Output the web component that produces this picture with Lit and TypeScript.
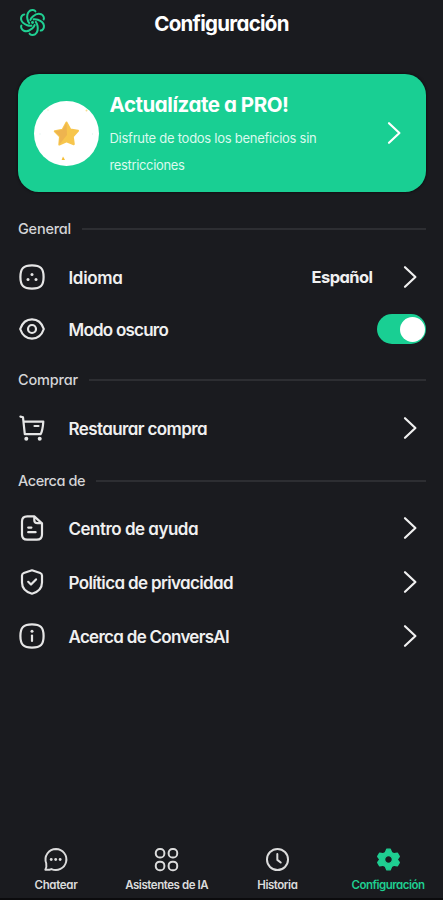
import { LitElement, html, css, svg, TemplateResult } from "lit";
import { customElement, property, state } from "lit/decorators.js";

/** Single-line label whose tracking is adjusted to occupy a given width. */
@customElement("fit-label")
class FitLabel extends LitElement {
  @property() text = "";
  @property({ type: Number }) span = 0;
  @state() private tracking = 0;

  static styles = css`
    :host { display: block; flex: none; white-space: nowrap; }
    .t { display: inline-block; }
  `;

  firstUpdated() {
    const el = this.renderRoot.querySelector(".t") as HTMLElement;
    const natural = el.getBoundingClientRect().width;
    this.tracking = (this.span - natural) / this.text.length;
  }

  render() {
    return html`<span class="t" style="letter-spacing:${this.tracking}px">${this.text}</span>`;
  }
}

const icon = (body: TemplateResult | unknown, cls = "icon") =>
  html`<svg class=${cls} viewBox="0 0 28 28" fill="none" stroke="currentColor" stroke-width="2.2" stroke-linecap="round" stroke-linejoin="round">${body}</svg>`;

const squircle = svg`<path d="M14 2.4C22.6 2.4 25.6 5.4 25.6 14S22.6 25.6 14 25.6 2.4 22.6 2.4 14 5.4 2.4 14 2.4Z"/>`;

const icons: Record<string, unknown> = {
  language: svg`${squircle}<g fill="currentColor" stroke="none"><circle cx="14" cy="11.4" r="1.5"/><circle cx="10" cy="16.6" r="1.5"/><circle cx="18" cy="16.6" r="1.5"/></g>`,
  eye: svg`<path d="M2.2 14C4.2 8 8.6 4.4 14 4.4S23.8 8 25.8 14C23.8 20 19.4 23.6 14 23.6S4.2 20 2.2 14Z"/><circle cx="14" cy="14" r="4"/>`,
  cart: svg`<path d="M2.4 2.6 5 3.3 6.8 20.2H22.6C24.2 17.5 25 12 25.3 7.6H5.8M16.5 12H20.5"/><g fill="currentColor" stroke="none"><circle cx="8.3" cy="24.8" r="2"/><circle cx="21.7" cy="24.8" r="2"/></g>`,
  doc: svg`<path d="M16.3 2.4H9.2Q4 2.4 4 7.6V20.4Q4 25.6 9.2 25.6H18.8Q24 25.6 24 20.4V9.4ZM16.3 2.6V6.2Q16.3 9.2 19.4 9.2H23.5M10.2 13.6H13.4M10.2 18.2H17.6"/>`,
  shield: svg`<path d="M14 2.3 22.2 5Q24 5.7 24 7.6V14.4C24 20.6 19 24.2 14 25.7 9 24.2 4 20.6 4 14.4V7.6Q4 5.7 5.8 5ZM10.2 13.8 13 16.5 18 11.4"/>`,
  info: svg`${squircle}<path d="M14 13.6V19"/><circle cx="14" cy="9.2" r="1.5" fill="currentColor" stroke="none"/>`,
  chat: svg`<path d="M14.6 2.2A11.8 11.8 0 1 1 9.4 24.7Q6.4 26 2.6 25.4 4.4 22.6 3.6 18.2A11.8 11.8 0 0 1 14.6 2.2Z"/><g fill="currentColor" stroke="none"><circle cx="9.2" cy="14" r="1.6"/><circle cx="14.2" cy="14" r="1.6"/><circle cx="19.2" cy="14" r="1.6"/></g>`,
  grid: svg`<rect x="2" y="2.2" width="9.6" height="9.6" rx="4.3"/><rect x="16.4" y="2.2" width="9.6" height="9.6" rx="4.3"/><rect x="2" y="16.4" width="9.6" height="9.6" rx="4.3"/><rect x="16.4" y="16.4" width="9.6" height="9.6" rx="4.3"/>`,
  clock: svg`<circle cx="14" cy="14" r="11.8"/><path d="M13.8 7.8V14.4L17.6 17.4"/>`,
  gear: svg`<path fill="currentColor" fill-rule="evenodd" stroke-width="1.6" d="M12.2 2.4H15.8L17.6 6.4 20.4 7.6 24 7 26 10.6 23.6 14 26 17.4 24 21 20.4 20.4 17.6 21.6 15.8 25.6H12.2L10.4 21.6 7.6 20.4 4 21 2 17.4 4.4 14 2 10.6 4 7 7.6 7.6 10.4 6.4ZM14 9.6A4.4 4.4 0 1 0 14 18.4 4.4 4.4 0 1 0 14 9.6Z"/>`,
};

const chevron = html`<svg class="chevron" viewBox="0 0 14 24" fill="none" stroke="currentColor" stroke-width="2.2" stroke-linecap="round" stroke-linejoin="round"><path d="M2 2.2 12.4 12 2 21.8"/></svg>`;

interface Row { icon: string; label: string; span: number; value?: string; toggle?: boolean }
interface Section { cls: string; title: string; span: number; rows: Row[] }

const sections: Section[] = [
  { cls: "general", title: "General", span: 53, rows: [
    { icon: "language", label: "Idioma", span: 54, value: "Español" },
    { icon: "eye", label: "Modo oscuro", span: 99.5, toggle: true },
  ] },
  { cls: "buy", title: "Comprar", span: 60, rows: [
    { icon: "cart", label: "Restaurar compra", span: 138.5 },
  ] },
  { cls: "about", title: "Acerca de", span: 67, rows: [
    { icon: "doc", label: "Centro de ayuda", span: 129.5 },
    { icon: "shield", label: "Política de privacidad", span: 164.5 },
    { icon: "info", label: "Acerca de ConversAI", span: 160.5 },
  ] },
];

const tabs = [
  { icon: "chat", label: "Chatear", span: 43 },
  { icon: "grid", label: "Asistentes de IA", span: 83 },
  { icon: "clock", label: "Historia", span: 40 },
  { icon: "gear", label: "Configuración", span: 73 },
];

@customElement("app-root")
class AppRoot extends LitElement {
  @state() private dark = true;

  static styles = css`
    :host {
      display: flex; flex-direction: column; box-sizing: border-box;
      width: 100%; height: 900px; overflow: hidden;
      background: #1a1b1f; color: #f0f0f0; border-bottom: 2px solid #0b0b0d;
      font-family: Inter, Lato, sans-serif; font-feature-settings: "cv11";
    }
    svg { display: block; flex: none; overflow: visible; }
    header { display: grid; grid-template-columns: 60px 1fr 60px; align-items: center; height: 46px; }
    .logo { width: 27px; height: 27px; margin-left: 19px; margin-top: -1px; color: #20cf92; }
    .title { justify-self: center; font-size: 20.5px; font-weight: 650; color: #fff; }
    .card {
      display: flex; align-items: center; flex: none; box-sizing: border-box;
      margin: 28px 17px 0 17.5px; height: 118px; padding: 0 25.5px 0 16px;
      border-radius: 21px; background: #19cf93; color: #fff;
      box-shadow: 0 0 3px #07090a;
    }
    .badge { flex: none; width: 65px; height: 65px; border-radius: 50%; background: #fff; }
    .copy { flex: 1; margin-left: 11px; padding-top: 3px; }
    .promo { font-size: 20.5px; font-weight: 700; line-height: 28px; margin-bottom: 6px; }
    .sub { font-size: 13px; line-height: 27px; color: #dbfaee; }
    .chevron { width: 14px; height: 24px; }
    section { margin: 0 17px 0 18px; }
    .general { margin-top: 27px; }
    .buy { margin-top: 15px; }
    .about { margin-top: 16px; }
    .head { display: flex; align-items: center; gap: 11px; height: 20px; font-size: 14.5px; line-height: 18px; font-weight: 500; color: #d5d5d7; }
    .rule { flex: 1; height: 2px; background: #2d2e32; }
    .general .head { margin-bottom: 12px; }
    .buy .head { margin-bottom: 11px; }
    .about .head { margin-bottom: 10px; }
    .row { display: flex; align-items: center; height: 54px; }
    .general .row { height: 52px; }
    .icon { width: 28px; height: 28px; color: #e6e6e6; }
    .label { margin-left: 22.5px; margin-right: auto; padding-top: 1px; font-size: 17px; font-weight: 600; }
    .value { margin-right: 30.5px; font-size: 16.5px; font-weight: 700; }
    .row .chevron { margin-right: 9px; }
    .toggle { box-sizing: border-box; width: 49px; height: 30px; padding: 2.5px; border: 0; border-radius: 15px; background: #55575c; display: flex; align-items: center; }
    .toggle.on { background: #19cf93; justify-content: flex-end; padding-right: 1px; }
    .knob { width: 25px; height: 25px; border-radius: 50%; background: #fff; }
    nav { display: grid; grid-template-columns: repeat(4, 110.7px); justify-content: center; margin-top: auto; height: 51px; padding-left: 1px; }
    .tab { display: flex; flex-direction: column; align-items: center; gap: 5px; font-size: 11.5px; font-weight: 600; line-height: 16px; color: #dcdcdc; }
    .tab .icon { width: 25px; height: 25px; color: inherit; }
    .tab.active { color: #1fce91; }
  `;

  private logo() {
    return html`<svg class="logo" viewBox="-14 -14 28 28" fill="none" stroke="currentColor" stroke-width="2.1" stroke-linecap="round">
      ${[0, 60, 120, 180, 240, 300].map(a => svg`<path transform="rotate(${a})" d="M3 -11.6C2 -13.2 -.8 -13.5 -3 -12 -5.5 -10 -5.8 -6.4 -5.2 -3.4 -4.8 -1.6 -4.2 -.4 -3.4 .6"/>`)}
      <circle r="1.5" fill="currentColor" stroke="none"/>
    </svg>`;
  }

  private badge() {
    return html`<svg class="badge" viewBox="0 0 65 65">
      <path d="M32.5 21.5 36.3 28.5 44 29.8 38.8 35.6 39.8 43.2 32.5 40.3 25.3 43.5 26 35.6 20.8 30.2 28.6 28.8Z" fill="#f7c64d" stroke="#f7c64d" stroke-width="2" stroke-linejoin="round"/>
      <path d="M32.5 21.5 33 34 25.3 43.5 26 35.6 20.8 30.2 28.6 28.8Z" fill="#eeb44f"/>
      <path d="M29 55.4 31 59 27.6 59Z" fill="#f5be35"/>
      <circle cx="52.5" cy="9.5" r="1" fill="#f8dc91"/><circle cx="14" cy="9" r=".7" fill="#f8e8bd"/>
      <circle cx="6" cy="33" r=".7" fill="#e3f2ed"/><circle cx="58.5" cy="33" r=".7" fill="#e3f2ed"/>
    </svg>`;
  }

  private row(r: Row) {
    return html`<div class="row">
      ${icon(icons[r.icon])}
      <fit-label class="label" .text=${r.label} .span=${r.span}></fit-label>
      ${r.value ? html`<fit-label class="value" .text=${r.value} .span=${61}></fit-label>` : ""}
      ${r.toggle
        ? html`<button class="toggle ${this.dark ? "on" : ""}" aria-label=${r.label} @click=${() => (this.dark = !this.dark)}><span class="knob"></span></button>`
        : chevron}
    </div>`;
  }

  render() {
    return html`
      <header>${this.logo()}<fit-label class="title" .text=${"Configuración"} .span=${134.5}></fit-label></header>
      <div class="card">
        ${this.badge()}
        <div class="copy">
          <fit-label class="promo" .text=${"Actualízate a PRO!"} .span=${179}></fit-label>
          <fit-label class="sub" .text=${"Disfrute de todos los beneficios sin"} .span=${207}></fit-label>
          <fit-label class="sub" .text=${"restricciones"} .span=${75}></fit-label>
        </div>
        ${chevron}
      </div>
      ${sections.map(s => html`<section class=${s.cls}>
        <div class="head"><fit-label .text=${s.title} .span=${s.span}></fit-label><div class="rule"></div></div>
        ${s.rows.map(r => this.row(r))}
      </section>`)}
      <nav>${tabs.map((t, i) => html`<div class="tab ${i === 3 ? "active" : ""}">
        ${icon(icons[t.icon])}<fit-label .text=${t.label} .span=${t.span}></fit-label>
      </div>`)}</nav>`;
  }
}
